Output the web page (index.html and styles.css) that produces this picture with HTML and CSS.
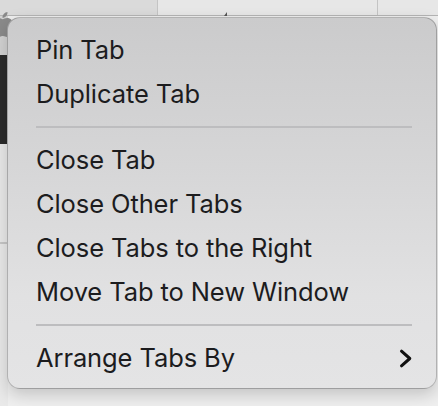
FILE: index.html
```
<!DOCTYPE html>
<html>
<head>
<meta charset="utf-8">
<link rel="stylesheet" href="styles.css">
</head>
<body>
<div class="desktop">
  <div class="tabbar">
    <div class="tab tab-active"></div>
    <div class="tab tab-mid"><span class="cursor"></span></div>
    <div class="tab tab-end"></div>
  </div>
  <div class="content">
    <div class="side">
      <div class="side-top">
        <svg class="apple" width="25" height="25" viewBox="0 0 24 24"><path fill="#8a8a8a" d="M12.152 6.896c-.948 0-2.415-1.078-3.96-1.04-2.04.027-3.91 1.183-4.961 3.014-2.117 3.675-.546 9.103 1.519 12.09 1.013 1.454 2.208 3.09 3.792 3.039 1.52-.065 2.09-.987 3.935-.987 1.831 0 2.35.987 3.96.948 1.637-.026 2.676-1.48 3.676-2.948 1.156-1.688 1.636-3.325 1.662-3.415-.039-.013-3.182-1.221-3.22-4.857-.026-3.04 2.48-4.494 2.597-4.559-1.429-2.09-3.623-2.324-4.39-2.376-2-.156-3.675 1.09-4.61 1.09zM15.53 3.83c.843-1.012 1.4-2.427 1.245-3.83-1.207.052-2.662.805-3.532 1.818-.78.896-1.454 2.338-1.273 3.714 1.338.104 2.715-.688 3.559-1.701z"/></svg>
      </div>
      <div class="side-dark"></div>
      <div class="side-light"></div>
      <div class="side-light side-lower"></div>
    </div>
    <div class="main"></div>
  </div>
</div>

<div class="menu">
  <div class="item">Pin Tab</div>
  <div class="item">Duplicate Tab</div>
  <div class="sep"></div>
  <div class="item">Close Tab</div>
  <div class="item">Close Other Tabs</div>
  <div class="item">Close Tabs to the Right</div>
  <div class="item">Move Tab to New Window</div>
  <div class="sep"></div>
  <div class="item">
    <span>Arrange Tabs By</span>
    <svg class="chev" width="14" height="19" viewBox="0 0 14 19"><polyline points="2.5,2.2 10.8,9.5 2.5,16.8" fill="none" stroke="#111" stroke-width="3" stroke-linecap="round" stroke-linejoin="round"/></svg>
  </div>
</div>
</body>
</html>
```
FILE: styles.css
```
html, body {
  margin: 0;
  padding: 0;
}
body {
  width: 438px;
  height: 406px;
  overflow: hidden;
  position: relative;
  background: #efefef;
  font-family: Inter, "Noto Sans", "Liberation Sans", sans-serif;
}
.desktop {
  display: flex;
  flex-direction: column;
  height: 406px;
}
.tabbar {
  display: flex;
  height: 15px;
  border-bottom: 1px solid #b4b4b4;
  background: #e4e4e4;
}
.tab {
  height: 100%;
}
.tab-active {
  width: 157px;
  background: #dadada;
  border-right: 1px solid #c4c4c4;
}
.tab-mid {
  width: 219px;
  background: #e7e7e7;
  border-right: 1px solid #c4c4c4;
  position: relative;
}
.tab-end {
  flex: 1;
  background: #e7e7e7;
}
.cursor {
  position: absolute;
  left: 66px;
  top: 12px;
  width: 0;
  height: 0;
  border-left: 3px solid transparent;
  border-bottom: 4px solid #555;
}
.content {
  flex: 1;
  display: flex;
}
.side {
  width: 8px;
  flex-shrink: 0;
  display: flex;
  flex-direction: column;
}
.side-top {
  height: 39px;
  background: #d2d2d2;
  position: relative;
}
.apple {
  position: absolute;
  left: -10px;
  top: -4px;
  display: block;
}
.side-dark {
  height: 89px;
  background: #2b2b2b;
}
.side-light {
  height: 98px;
  background: #e9e9e9;
  border-bottom: 2px solid #c6c6c6;
}
.side-lower {
  flex: 1;
  border-bottom: none;
}
.main {
  flex: 1;
  background: #efefef;
}
.menu {
  position: absolute;
  left: 7px;
  top: 17px;
  width: 428px;
  padding: 10px 0 8px;
  border: 1px solid rgba(0, 0, 0, 0.22);
  border-radius: 13px;
  background: linear-gradient(180deg, #cbcbcc 0%, #d6d6d7 40%, #e1e1e2 75%, #e4e4e5 100%);
  box-shadow: 0 6px 16px rgba(0, 0, 0, 0.18);
  color: #1c1c1e;
}
.item {
  height: 44px;
  display: flex;
  align-items: center;
  justify-content: space-between;
  padding: 0 23px 0 28px;
  font-size: 25.5px;
  line-height: 44px;
  letter-spacing: -0.1px;
}
.chev {
  display: block;
}
.sep {
  height: 22px;
  display: flex;
  align-items: center;
  padding: 0 24px 0 28px;
}
.sep::before {
  content: "";
  flex: 1;
  height: 2px;
  background: #bdbdbf;
}
```
